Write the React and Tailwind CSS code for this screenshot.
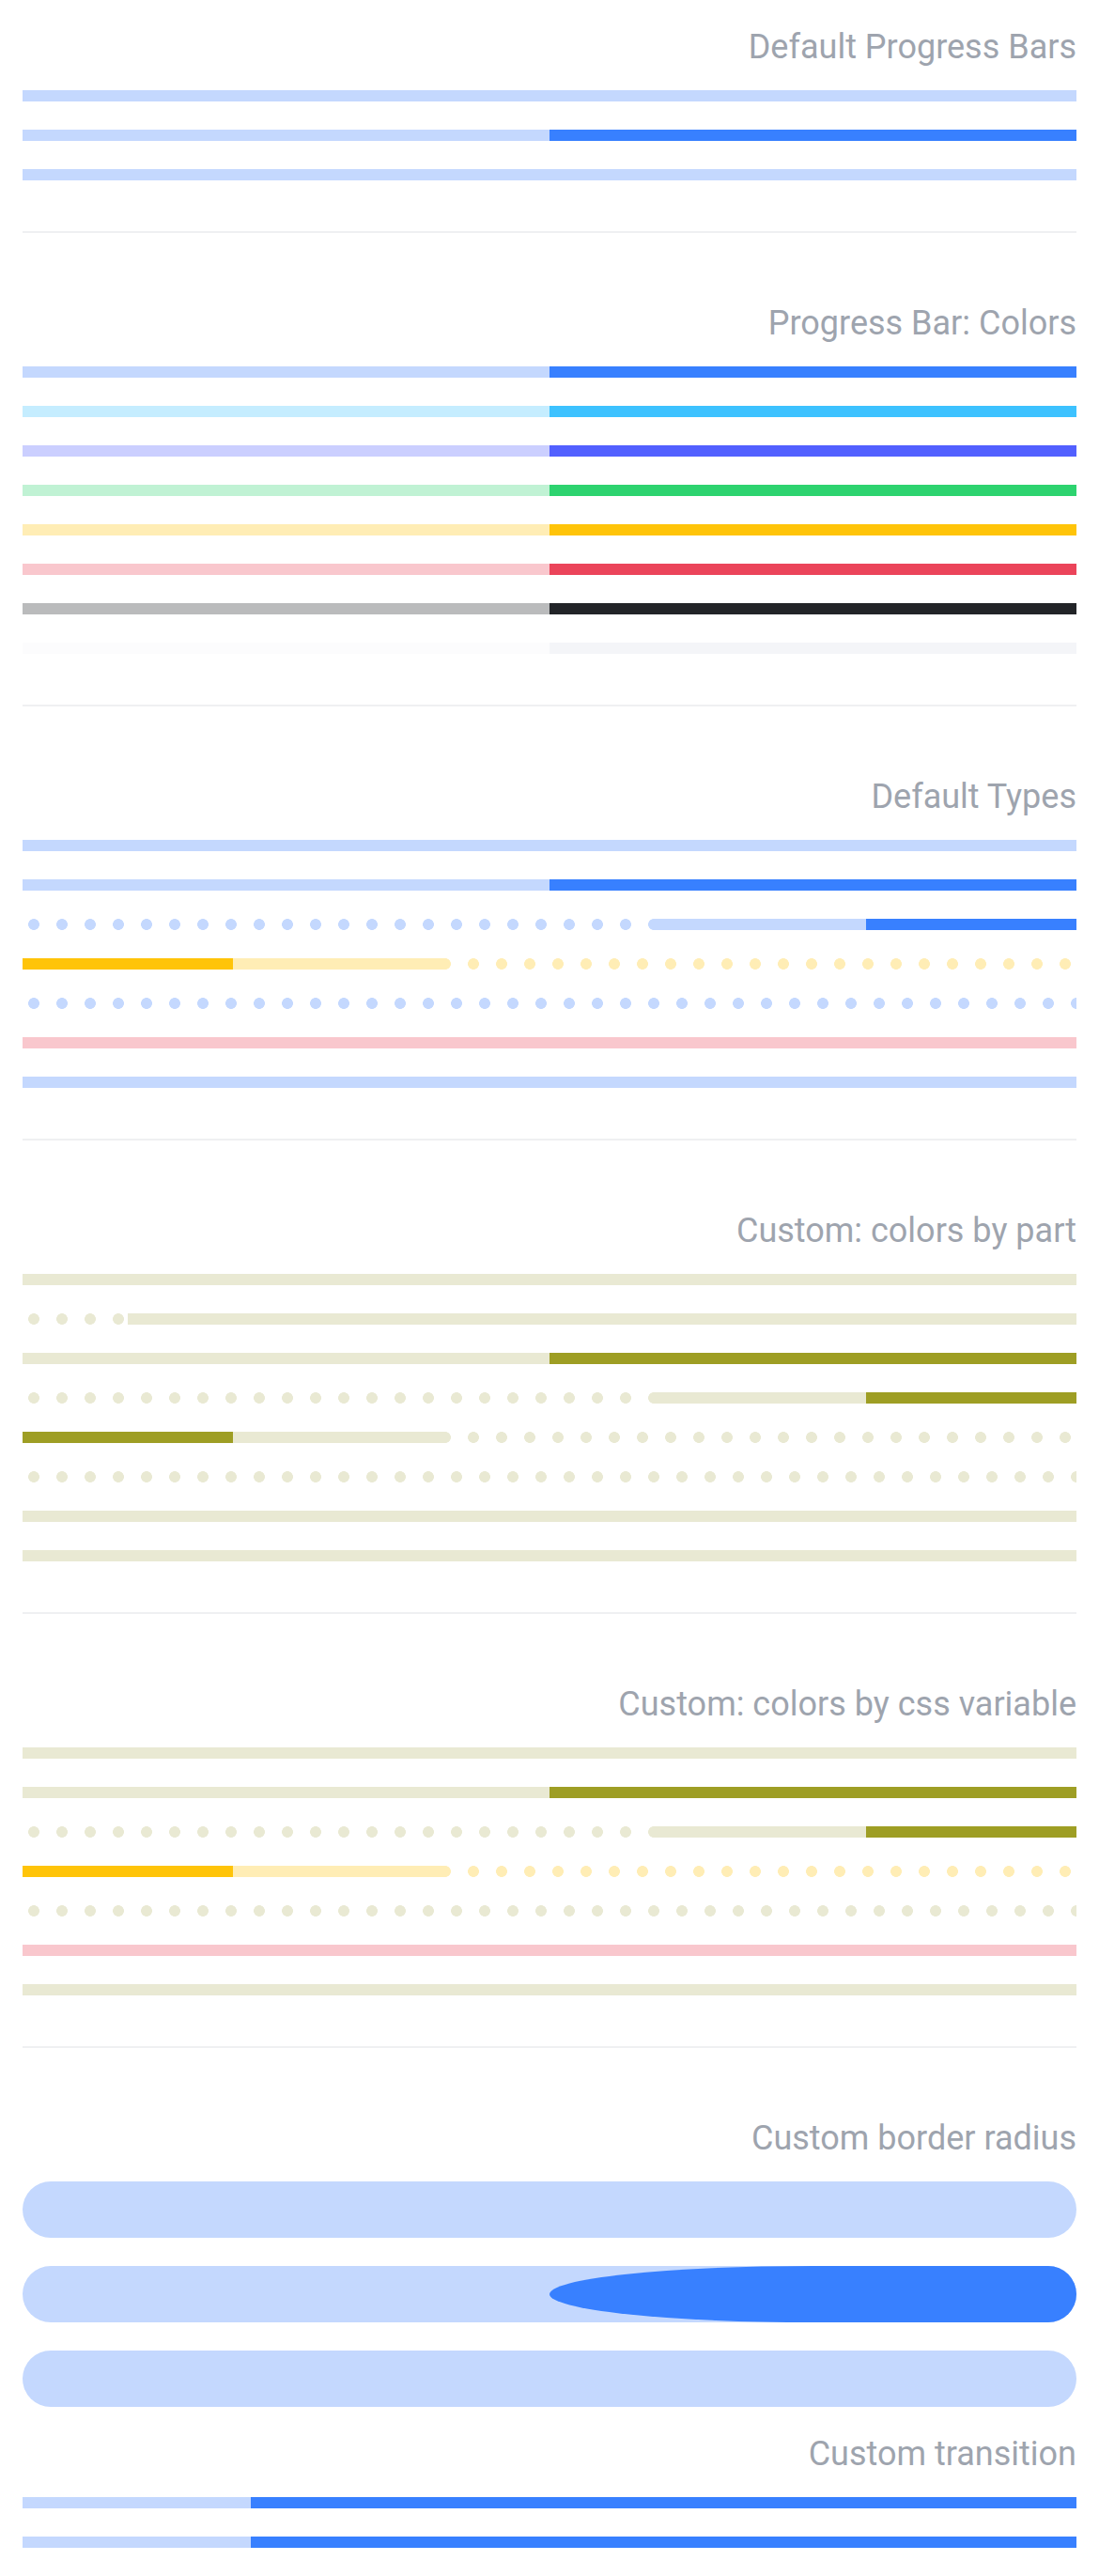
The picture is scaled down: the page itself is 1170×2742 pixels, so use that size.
import React from "react";

const Title = ({ children }) => (
  <div className="text-right text-[36px] leading-[40px] text-[#9ea4ae] font-['Roboto',sans-serif]">
    {children}
  </div>
);

const Divider = () => <div className="mt-[54px] mb-[76px] h-[2px] bg-[#eff0f2]" />;

const Bars = ({ children, big }) => (
  <div className={big ? "mt-[26px] flex flex-col gap-[30px]" : "mt-[26px] flex flex-col gap-[30px]"}>{children}</div>
);

// solid full bar
const Full = ({ light }) => <div className={`h-[12px] w-full ${light}`} />;

// half filled from the right
const Half = ({ light, dark }) => (
  <div className={`flex h-[12px] w-full justify-end ${light}`}>
    <div className={`h-full w-1/2 ${dark}`} />
  </div>
);

// buffer, right-to-left: dots behind, buffer 40%, value 20%
const BufferRtl = ({ dots, light, dark }) => (
  <div className={`flex h-[12px] w-full justify-end bg-[length:30px_12px] bg-[position:-3px_0px] bg-repeat-x ${dots}`}>
    <div className={`flex h-full w-[40%] justify-end ${light}`}>
      <div className={`h-full w-1/2 ${dark}`} />
    </div>
  </div>
);

// buffer, left-to-right
const BufferLtr = ({ dots, light, dark }) => (
  <div className={`flex h-[12px] w-full bg-[length:30px_12px] bg-[position:-15px_0px] bg-repeat-x ${dots}`}>
    <div className={`h-full w-[20%] ${dark}`} />
    <div className={`h-full w-[20%] ${light}`} />
  </div>
);

const Dots = ({ dots }) => (
  <div className={`h-[12px] w-full bg-[length:30px_12px] bg-[position:-3px_0px] bg-repeat-x ${dots}`} />
);

const BLUE_L = "bg-[#c4d8fe]";
const BLUE_D = "bg-[#3880ff]";
const BLUE_DOTS = "bg-[radial-gradient(circle,#c4d8fe_5.6px,transparent_6.2px)]";
const YEL_L = "bg-[#ffedb5]";
const YEL_D = "bg-[#ffc409]";
const YEL_DOTS = "bg-[radial-gradient(circle,#ffedb5_5.6px,transparent_6.2px)]";
const OL_L = "bg-[#e9e9d3]";
const OL_D = "bg-[#9e9e24]";
const OL_DOTS = "bg-[radial-gradient(circle,#e9e9d3_5.6px,transparent_6.2px)]";
const PINK = "bg-[#f9c7cd]";

export default function App() {
  return (
    <div className="min-h-[2742px] bg-white px-[24px] pt-[30px] pb-[30px] font-['Roboto',sans-serif]">
      {/* Section 1 */}
      <Title>Default Progress Bars</Title>
      <Bars>
        <Full light={BLUE_L} />
        <Half light={BLUE_L} dark={BLUE_D} />
        <Full light={BLUE_L} />
      </Bars>
      <Divider />

      {/* Section 2 */}
      <Title>Progress Bar: Colors</Title>
      <Bars>
        <Half light="bg-[#c4d8fe]" dark="bg-[#3880ff]" />
        <Half light="bg-[#c5edff]" dark="bg-[#3dc2ff]" />
        <Half light="bg-[#cbcfff]" dark="bg-[#5260ff]" />
        <Half light="bg-[#c0f2d4]" dark="bg-[#2dd36f]" />
        <Half light="bg-[#ffedb5]" dark="bg-[#ffc409]" />
        <Half light="bg-[#f9c7cd]" dark="bg-[#eb445a]" />
        <Half light="bg-[#babbbc]" dark="bg-[#222428]" />
        <Half light="bg-[#fcfcfd]" dark="bg-[#f4f5f8]" />
      </Bars>
      <Divider />

      {/* Section 3 */}
      <Title>Default Types</Title>
      <Bars>
        <Full light={BLUE_L} />
        <Half light={BLUE_L} dark={BLUE_D} />
        <BufferRtl dots={BLUE_DOTS} light={BLUE_L} dark={BLUE_D} />
        <BufferLtr dots={YEL_DOTS} light={YEL_L} dark={YEL_D} />
        <Dots dots={BLUE_DOTS} />
        <Full light={PINK} />
        <Full light={BLUE_L} />
      </Bars>
      <Divider />

      {/* Section 4 */}
      <Title>Custom: colors by part</Title>
      <Bars>
        <Full light={OL_L} />
        <div className={`flex h-[12px] w-full justify-end bg-[length:30px_12px] bg-[position:-3px_0px] bg-repeat-x ${OL_DOTS}`}>
          <div className={`h-full w-[90%] ${OL_L}`} />
        </div>
        <Half light={OL_L} dark={OL_D} />
        <BufferRtl dots={OL_DOTS} light={OL_L} dark={OL_D} />
        <BufferLtr dots={OL_DOTS} light={OL_L} dark={OL_D} />
        <Dots dots={OL_DOTS} />
        <Full light={OL_L} />
        <Full light={OL_L} />
      </Bars>
      <Divider />

      {/* Section 5 */}
      <Title>Custom: colors by css variable</Title>
      <Bars>
        <Full light={OL_L} />
        <Half light={OL_L} dark={OL_D} />
        <BufferRtl dots={OL_DOTS} light={OL_L} dark={OL_D} />
        <BufferLtr dots={YEL_DOTS} light={YEL_L} dark={YEL_D} />
        <Dots dots={OL_DOTS} />
        <Full light={PINK} />
        <Full light={OL_L} />
      </Bars>
      <Divider />

      {/* Section 6 */}
      <Title>Custom border radius</Title>
      <div className="mt-[26px] flex flex-col gap-[30px]">
        <div className="h-[60px] w-full rounded-full bg-[#c4d8fe]" />
        <div className="flex h-[60px] w-full justify-end overflow-hidden rounded-full bg-[#c4d8fe]">
          <div className="h-full w-1/2 rounded-l-[50%] bg-[#3880ff]" />
        </div>
        <div className="h-[60px] w-full rounded-full bg-[#c4d8fe]" />
      </div>

      <div className="mt-[30px]">
        <Title>Custom transition</Title>
      </div>
      <Bars>
        <div className="flex h-[12px] w-full justify-end bg-[#c4d8fe]">
          <div className="h-full w-[78.3%] bg-[#3880ff]" />
        </div>
        <div className="flex h-[12px] w-full justify-end bg-[#c4d8fe]">
          <div className="h-full w-[78.3%] bg-[#3880ff]" />
        </div>
      </Bars>
    </div>
  );
}
